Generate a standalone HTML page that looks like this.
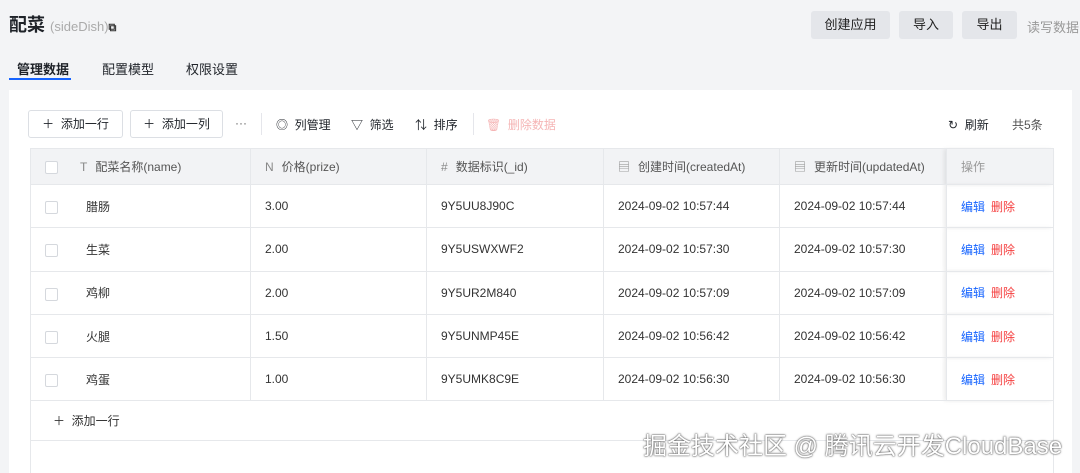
<!DOCTYPE html>
<html><head><meta charset="utf-8"><style>
*{box-sizing:border-box;margin:0;padding:0}
body{width:1080px;height:473px;overflow:hidden;background:#f3f4f6;font-family:"Liberation Sans","Noto Sans CJK SC",sans-serif;color:#1f2329;position:relative}
.abs{position:absolute}
.btn{position:absolute;top:11px;height:28px;background:#e4e6ea;border-radius:3px;font-size:13px;line-height:28px;text-align:center;color:#222}
.panel{position:absolute;left:9px;top:90px;width:1063px;height:383px;background:#fff}
.tb{position:absolute;top:110px;height:28px;border:1px solid #dcdfe4;border-radius:3px;font-size:12px;line-height:26px;text-align:center;background:#fff}
.t{position:absolute;font-size:12px;top:116px}
table{position:absolute;left:30px;top:148px;width:1024px;border-collapse:collapse;font-size:12px;color:#333}
td{border:1px solid #e6e8eb;height:43.3px;padding-left:14px}
th{background:#f2f3f5;border:1px solid #e6e8eb;height:36px;font-weight:normal;text-align:left;padding-left:14px;color:#555}
.cb{display:inline-block;width:13px;height:13px;border:1px solid #d5d8dd;border-radius:2px;vertical-align:middle;background:#fff}
.ic{color:#888;margin-right:8px}
.e{color:#1664ff}.d{color:#f53f3f;margin-left:6px}
.op{box-shadow:-3px 0 4px rgba(0,0,0,.08)}
</style></head><body>
<div class="abs" style="left:9px;top:11px;font-size:18px;font-weight:bold">配菜 <span style="font-size:13px;font-weight:normal;color:#aaa">(sideDish)</span><span style="font-size:11px;color:#333">⧉</span></div>
<div class="btn" style="left:811px;width:79px">创建应用</div>
<div class="btn" style="left:899px;width:54px">导入</div>
<div class="btn" style="left:962px;width:55px">导出</div>
<div class="abs" style="left:1027px;top:17px;font-size:13px;color:#999">读写数据</div>
<div class="abs" style="left:17px;top:59px;font-size:13px;font-weight:bold">管理数据</div>
<div class="abs" style="left:9px;top:78px;width:62px;height:2px;background:#1664ff"></div>
<div class="abs" style="left:102px;top:59px;font-size:13px">配置模型</div>
<div class="abs" style="left:186px;top:59px;font-size:13px">权限设置</div>
<div class="panel"></div>
<div class="tb" style="left:28px;width:95px">＋&nbsp; 添加一行</div>
<div class="tb" style="left:130px;width:93px">＋&nbsp; 添加一列</div>
<div class="t" style="left:235px;color:#666">···</div>
<div class="abs" style="left:261px;top:113px;width:1px;height:22px;background:#e5e6eb"></div>
<div class="t" style="left:276px">◎&nbsp; 列管理</div>
<div class="t" style="left:351px">▽&nbsp; 筛选</div>
<div class="t" style="left:415px">⇅&nbsp; 排序</div>
<div class="abs" style="left:473px;top:113px;width:1px;height:22px;background:#e5e6eb"></div>
<div class="t" style="left:486px;color:#f5b5b5">🗑&nbsp; 删除数据</div>
<div class="t" style="left:948px">↻&nbsp; 刷新</div>
<div class="t" style="left:1012px;color:#555">共5条</div>
<table>
<tr><th style="width:220px"><span class="cb" style="margin-right:22px"></span><span class="ic">T</span>配菜名称(name)</th><th style="width:176px"><span class="ic">N</span>价格(prize)</th><th style="width:177px"><span class="ic">#</span>数据标识(_id)</th><th style="width:176px"><span class="ic">▤</span>创建时间(createdAt)</th><th style="width:167px"><span class="ic">▤</span>更新时间(updatedAt)</th><th class="op" style="color:#999">操作</th></tr>
<tr><td><span class="cb" style="margin-right:28px"></span>腊肠</td><td>3.00</td><td>9Y5UU8J90C</td><td>2024-09-02 10:57:44</td><td>2024-09-02 10:57:44</td><td class="op"><span class="e">编辑</span><span class="d">删除</span></td></tr>
<tr><td><span class="cb" style="margin-right:28px"></span>生菜</td><td>2.00</td><td>9Y5USWXWF2</td><td>2024-09-02 10:57:30</td><td>2024-09-02 10:57:30</td><td class="op"><span class="e">编辑</span><span class="d">删除</span></td></tr>
<tr><td><span class="cb" style="margin-right:28px"></span>鸡柳</td><td>2.00</td><td>9Y5UR2M840</td><td>2024-09-02 10:57:09</td><td>2024-09-02 10:57:09</td><td class="op"><span class="e">编辑</span><span class="d">删除</span></td></tr>
<tr><td><span class="cb" style="margin-right:28px"></span>火腿</td><td>1.50</td><td>9Y5UNMP45E</td><td>2024-09-02 10:56:42</td><td>2024-09-02 10:56:42</td><td class="op"><span class="e">编辑</span><span class="d">删除</span></td></tr>
<tr><td><span class="cb" style="margin-right:28px"></span>鸡蛋</td><td>1.00</td><td>9Y5UMK8C9E</td><td>2024-09-02 10:56:30</td><td>2024-09-02 10:56:30</td><td class="op"><span class="e">编辑</span><span class="d">删除</span></td></tr>
<tr><td colspan="6" style="height:40px;padding-left:22px">＋&nbsp; 添加一行</td></tr>
</table>
<div class="abs" style="left:30px;top:441px;width:1px;height:32px;background:#e6e8eb"></div>
<div class="abs" style="left:1053px;top:441px;width:1px;height:32px;background:#e6e8eb"></div>
<div class="abs" style="left:643px;top:426px;font-size:24px;color:#fff;text-shadow:0 0 2px #555,0 0 1px #333;white-space:nowrap">掘金技术社区 @ 腾讯云开发CloudBase</div>
</body></html>
